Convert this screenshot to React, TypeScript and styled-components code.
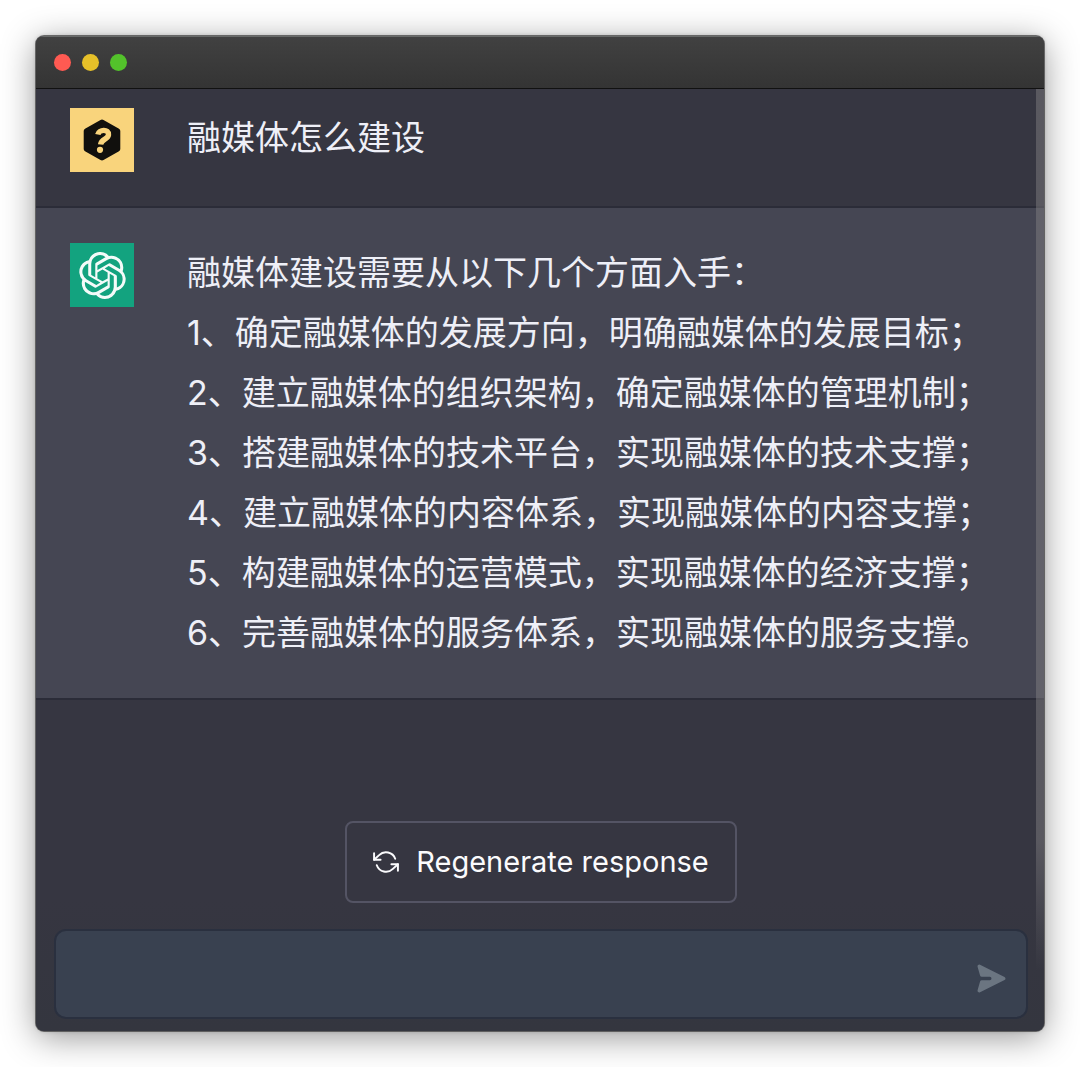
import React, { useState } from "react";
import styled, { createGlobalStyle } from "styled-components";
import { SiOpenai } from "react-icons/si";
import { FiRefreshCcw } from "react-icons/fi";

const GlobalStyle = createGlobalStyle`
  *, *::before, *::after { box-sizing: border-box; }
  body {
    margin: 0;
    background: #ffffff;
    font-family: Inter, "Noto Sans CJK SC", sans-serif;
  }
  #root { display: flow-root; }
`;

const Page = styled.main`
  padding: 36px;
`;

const Window = styled.section`
  display: flex;
  flex-direction: column;
  overflow: hidden;
  border-radius: 8px;
  background: #363641;
  box-shadow:
    0 0 0 1px rgba(70, 70, 70, 0.75),
    0 0 4px rgba(0, 0, 0, 0.2),
    0 6px 34px rgba(0, 0, 0, 0.42);
`;

const TitleBar = styled.header`
  display: flex;
  align-items: center;
  gap: 11px;
  height: 53px;
  padding: 0 18px;
  border-top: 1px solid #686a69;
  border-bottom: 1px solid #111111;
  background: linear-gradient(#414141, #343434);
`;

const Light = styled.button<{ $color: string }>`
  width: 17px;
  height: 17px;
  padding: 0;
  border: 0;
  border-radius: 50%;
  background: ${(p) => p.$color};
`;

const Chat = styled.div`
  position: relative;
  display: flex;
  flex-direction: column;
`;

const ScrollTrack = styled.div`
  position: absolute;
  top: 0;
  right: 0;
  bottom: 60px;
  width: 8px;
  background: linear-gradient(
    rgba(134, 132, 134, 0.45) 85%,
    rgba(134, 132, 134, 0)
  );
`;

const Message = styled.article<{ $answer?: boolean }>`
  display: flex;
  align-items: flex-start;
  gap: 53px;
  padding: ${(p) => (p.$answer ? "35px 34px" : "19px 34px 34px")};
  border-bottom: 2px solid #2b2c38;
  background: ${(p) => (p.$answer ? "#454653" : "#363641")};
`;

const Avatar = styled.div<{ $color: string }>`
  display: flex;
  align-items: center;
  justify-content: center;
  flex: none;
  width: 64px;
  height: 64px;
  color: #f4fbf9;
  background: ${(p) => p.$color};
`;

const Lines = styled.div`
  flex: 1;
  min-width: 0;
  color: #eeeff7;
  font-size: 34px;
  line-height: 60px;
`;

const Line = styled.p`
  margin: 0;
`;

const Footer = styled.footer`
  display: flex;
  flex-direction: column;
  align-items: center;
  gap: 26px;
  padding: 121px 16px 12px 18px;
  background: linear-gradient(#363641 60%, #34363f);
`;

const Regenerate = styled.button`
  display: flex;
  align-items: center;
  justify-content: center;
  gap: 17px;
  height: 82px;
  padding: 0 26px;
  border: 2px solid #545464;
  border-radius: 8px;
  background: #363641;
  color: #fbfbfd;
  font-family: inherit;
  font-size: 29px;
  line-height: 40px;
`;

const Composer = styled.form`
  display: flex;
  align-items: center;
  align-self: stretch;
  height: 90px;
  padding-right: 17px;
  border: 2px solid #2a303f;
  border-radius: 12px;
  background: #394150;
`;

const Prompt = styled.input`
  flex: 1;
  min-width: 0;
  height: 100%;
  padding: 0 20px;
  border: 0;
  outline: 0;
  background: transparent;
  color: #eeeff7;
  font-family: inherit;
  font-size: 29px;
`;

const Send = styled.button`
  display: flex;
  flex: none;
  margin-top: 8px;
  padding: 0;
  border: 0;
  background: transparent;
  color: #6b7581;
`;

function QuestionIcon() {
  return (
    <svg width="38" height="42" viewBox="0 0 38 42" fill="none" aria-hidden="true">
      <path
        d="M17.500 .9Q19 0 20.500 .9L36 9.700Q37.300 10.500 37.300 12V30Q37.300 31.500 36 32.300L20.500 41.100Q19 42 17.500 41.100L2 32.300Q.7 31.500 .7 30V12Q.7 10.500 2 9.700Z"
        fill="#11100d"
      />
      <path
        d="M14.800 15.500C15.800 10.300 26 9.600 25.500 15.800C25.100 20.600 18.400 19.700 17.600 25.500"
        stroke="#f9d47c"
        strokeWidth="5.400"
      />
      <circle cx="17" cy="30.800" r="3.100" fill="#f9d47c" />
    </svg>
  );
}

function SendIcon() {
  return (
    <svg width="35" height="35" viewBox="0 0 20 20" fill="currentColor" aria-hidden="true">
      <path
        transform="rotate(90 10 10)"
        d="M10.894 2.553a1 1 0 00-1.788 0l-7 14a1 1 0 001.169 1.409l5-1.429A1 1 0 009 15.571V11a1 1 0 112 0v4.571a1 1 0 00.725.962l5 1.428a1 1 0 001.17-1.408l-7-14z"
      />
    </svg>
  );
}

const lights = [
  { name: "Close", color: "#ff5a52" },
  { name: "Minimize", color: "#e6c029" },
  { name: "Zoom", color: "#53c22b" },
];

const answer = [
  "融媒体建设需要从以下几个方面入手：",
  "1、确定融媒体的发展方向，明确融媒体的发展目标；",
  "2、建立融媒体的组织架构，确定融媒体的管理机制；",
  "3、搭建融媒体的技术平台，实现融媒体的技术支撑；",
  "4、建立融媒体的内容体系，实现融媒体的内容支撑；",
  "5、构建融媒体的运营模式，实现融媒体的经济支撑；",
  "6、完善融媒体的服务体系，实现融媒体的服务支撑。",
];

export default function App() {
  const [prompt, setPrompt] = useState("");

  return (
    <>
      <GlobalStyle />
      <Page lang="zh-CN">
        <Window>
          <TitleBar>
            {lights.map((light) => (
              <Light key={light.name} type="button" aria-label={light.name} $color={light.color} />
            ))}
          </TitleBar>
          <Chat>
            <Message>
              <Avatar $color="#f9d47c">
                <QuestionIcon />
              </Avatar>
              <Lines>
                <Line>融媒体怎么建设</Line>
              </Lines>
            </Message>
            <Message $answer>
              <Avatar $color="#13a37f">
                <SiOpenai size={47} aria-hidden="true" />
              </Avatar>
              <Lines>
                {answer.map((line) => (
                  <Line key={line}>{line}</Line>
                ))}
              </Lines>
            </Message>
            <Footer>
              <Regenerate type="button">
                <FiRefreshCcw size={26} strokeWidth={1.8} aria-hidden="true" />
                Regenerate response
              </Regenerate>
              <Composer onSubmit={(event) => event.preventDefault()}>
                <Prompt
                  aria-label="Message"
                  value={prompt}
                  onChange={(event) => setPrompt(event.target.value)}
                />
                <Send type="submit" aria-label="Send">
                  <SendIcon />
                </Send>
              </Composer>
            </Footer>
            <ScrollTrack />
          </Chat>
        </Window>
      </Page>
    </>
  );
}
